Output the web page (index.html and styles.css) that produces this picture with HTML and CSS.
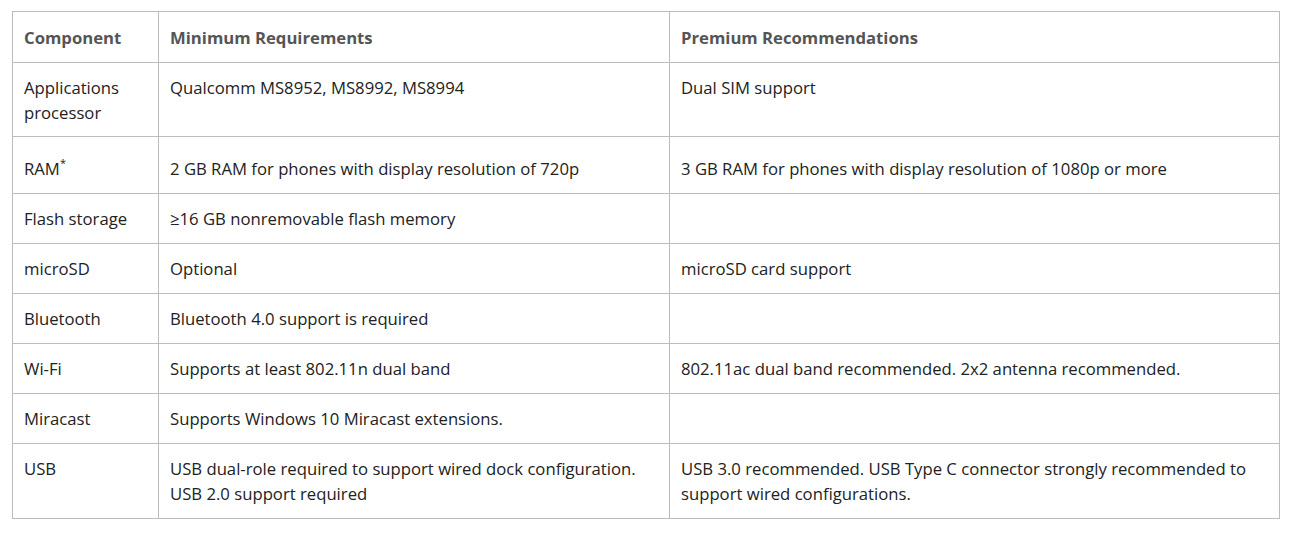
FILE: index.html
```html
<!DOCTYPE html>
<html lang="en">
<head>
<meta charset="utf-8">
<title>Hardware requirements</title>
<link rel="stylesheet" href="styles.css">
</head>
<body>
<table class="spec">
  <colgroup>
    <col class="c1">
    <col class="c2">
    <col class="c3">
  </colgroup>
  <thead>
    <tr><th>Component</th><th>Minimum Requirements</th><th>Premium Recommendations</th></tr>
  </thead>
  <tbody>
    <tr class="tight"><td>Applications processor</td><td>Qualcomm MS8952, MS8992, MS8994</td><td>Dual SIM support</td></tr>
    <tr class="ram"><td>RAM<sup>*</sup></td><td>2 GB RAM for phones with display resolution of 720p</td><td>3 GB RAM for phones with display resolution of 1080p or more</td></tr>
    <tr><td>Flash storage</td><td>≥16 GB nonremovable flash memory</td><td></td></tr>
    <tr><td>microSD</td><td>Optional</td><td>microSD card support</td></tr>
    <tr><td>Bluetooth</td><td>Bluetooth 4.0 support is required</td><td></td></tr>
    <tr><td>Wi-Fi</td><td>Supports at least 802.11n dual band</td><td>802.11ac dual band recommended. 2x2 antenna recommended.</td></tr>
    <tr><td>Miracast</td><td>Supports Windows 10 Miracast extensions.</td><td></td></tr>
    <tr><td>USB</td><td>USB dual-role required to support wired dock configuration.<br>USB 2.0 support required</td><td>USB 3.0 recommended. USB Type C connector strongly recommended to support wired configurations.</td></tr>
  </tbody>
</table>
</body>
</html>
```
FILE: styles.css
```css
html, body {
  margin: 0;
  padding: 0;
  background: #fff;
}
body {
  padding: 11px 12px;
  font-family: "Open Sans", "Noto Sans", sans-serif;
  font-size: 16.7px;
  color: #222;
}
.spec {
  width: 1267px;
  border-collapse: collapse;
  table-layout: fixed;
}
.c1 { width: 146px; }
.c2 { width: 511px; }
.c3 { width: 610px; }
.spec th,
.spec td {
  border: 1px solid #bcbcbc;
  padding: 12px 11px 12px 11px;
  text-align: left;
  vertical-align: top;
  line-height: 25px;
}
.spec th {
  font-weight: 700;
  color: #555;
  padding-top: 13px;
  padding-bottom: 12px;
}
.spec .tight td {
  padding-bottom: 11px;
}
.spec sup {
  font-size: 11px;
  line-height: 0;
  position: relative;
  top: -1px;
}
.spec .ram td {
  padding-top: 19px;
  padding-bottom: 12px;
}
```
